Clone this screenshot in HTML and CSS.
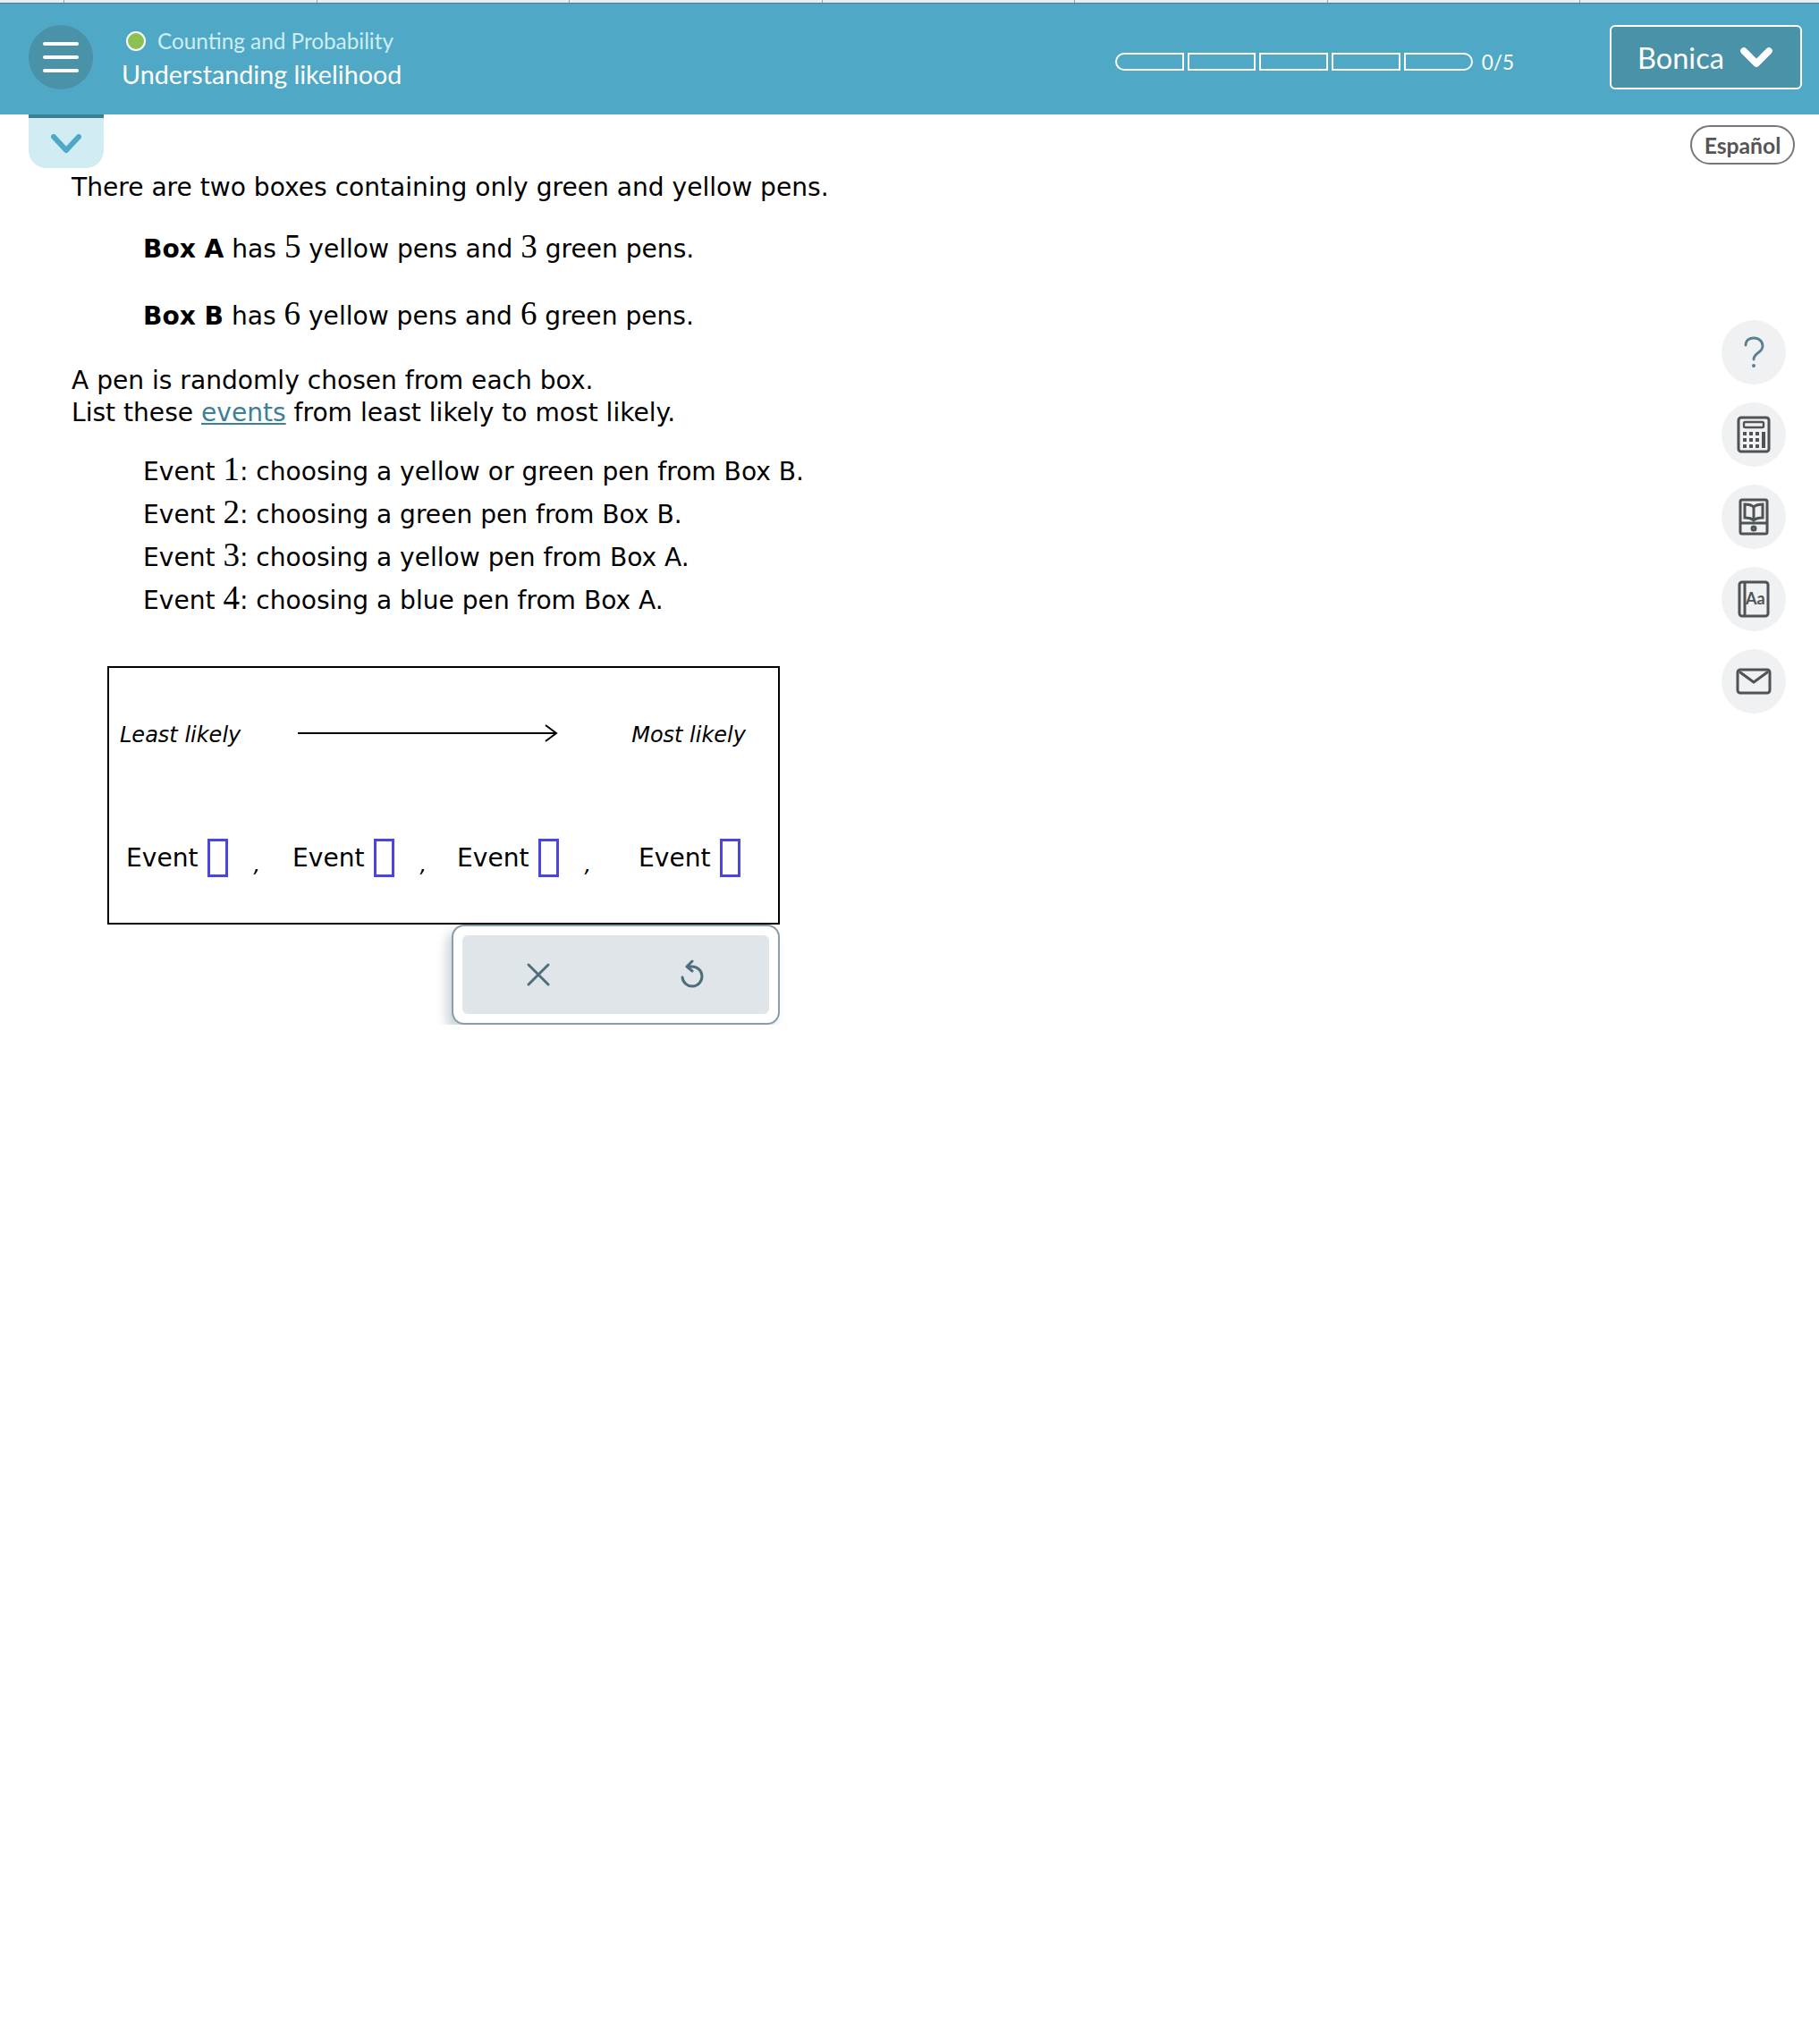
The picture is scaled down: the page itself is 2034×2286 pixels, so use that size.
FILE: index.html
```html
<!DOCTYPE html>
<html lang="en">
<head>
    <meta charset="UTF-8">
    <title>Understanding likelihood</title>
    <link rel="stylesheet" href="styles.css">
</head>
<body>
    <div class="tabstrip">
        <div class="tabcell first"></div>
        <div class="tabcell"></div>
        <div class="tabcell"></div>
        <div class="tabcell"></div>
        <div class="tabcell"></div>
        <div class="tabcell"></div>
        <div class="tabcell"></div>
    </div>

    <header class="topbar">
        <button class="menu-btn">
            <span></span><span></span><span></span>
        </button>
        <div class="titles">
            <div class="topic"><i class="dot"></i>Counting and Probability</div>
            <div class="lesson">Understanding likelihood</div>
        </div>
        <div class="progress">
            <div class="segments">
                <i></i><i></i><i></i><i></i><i></i>
            </div>
            <span class="score">0/5</span>
        </div>
        <button class="user-btn">
            Bonica
            <svg width="36" height="24" viewBox="0 0 36 24"><path d="M4 5 L18 19 L32 5" fill="none" stroke="#fff" stroke-width="7.5" stroke-linejoin="round" stroke-linecap="round"/></svg>
        </button>
    </header>

    <div class="page">
        <main class="content">
            <div class="drawer-tab">
                <svg width="34" height="22" viewBox="0 0 34 22"><path d="M3 3 L17 18 L31 3" fill="none" stroke="#4fa8c5" stroke-width="6" stroke-linejoin="round" stroke-linecap="round"/></svg>
            </div>

            <p class="lead">There are two boxes containing only green and yellow pens.</p>
            <p class="indent box-a"><b>Box A</b> has <span class="num">5</span> yellow pens and <span class="num">3</span> green pens.</p>
            <p class="indent box-b"><b>Box B</b> has <span class="num">6</span> yellow pens and <span class="num">6</span> green pens.</p>
            <p class="task">A pen is randomly chosen from each box.<br>List these <a href="#">events</a> from least likely to most likely.</p>

            <ul class="events">
                <li>Event <span class="num">1</span>: choosing a yellow or green pen from Box B.</li>
                <li>Event <span class="num">2</span>: choosing a green pen from Box B.</li>
                <li>Event <span class="num">3</span>: choosing a yellow pen from Box A.</li>
                <li>Event <span class="num">4</span>: choosing a blue pen from Box A.</li>
            </ul>

            <div class="answer">
                <div class="scale">
                    <em>Least likely</em>
                    <svg class="arrow" width="292" height="24" viewBox="0 0 292 24"><path d="M0 12 H289 M277 3 L289 12 L277 21" fill="none" stroke="#000" stroke-width="2"/></svg>
                    <em>Most likely</em>
                </div>
                <div class="slots">
                    <div class="slot">Event <i class="blank"></i><em class="comma">,</em></div>
                    <div class="slot">Event <i class="blank"></i><em class="comma">,</em></div>
                    <div class="slot">Event <i class="blank"></i><em class="comma">,</em></div>
                    <div class="slot">Event <i class="blank"></i></div>
                </div>
            </div>

            <div class="keypad">
                <div class="keypad-inner">
                    <svg width="28" height="28" viewBox="0 0 28 28"><path d="M3 3 L25 25 M25 3 L3 25" fill="none" stroke="#4d6f7c" stroke-width="3" stroke-linecap="round"/></svg>
                    <svg width="30" height="34" viewBox="0 0 30 34"><path d="M15 2 L9 8 L15 13 M10 8 H15 A11 11 0 1 1 4 20" fill="none" stroke="#4d6f7c" stroke-width="3" stroke-linecap="round" stroke-linejoin="round"/></svg>
                </div>
            </div>
        </main>

        <aside class="rail">
            <button class="lang">Español</button>
            <div class="tools">
                <button class="tool">
                    <svg width="40" height="40" viewBox="0 0 40 40"><path d="M11 12 C11 6 16 4 20 4 C26 4 30 8 30 13 C30 21 20 20 20 28" fill="none" stroke="#5a7f8e" stroke-width="2.8" stroke-linecap="round"/><circle cx="20" cy="35" r="2" fill="#5a7f8e"/></svg>
                </button>
                <button class="tool">
                    <svg width="40" height="42" viewBox="0 0 40 42">
                        <rect x="3" y="2" width="34" height="38" rx="3" fill="none" stroke="#4d5356" stroke-width="3"/>
                        <rect x="9" y="7" width="22" height="6" rx="1.5" fill="none" stroke="#4d5356" stroke-width="2.4"/>
                        <g fill="#4d5356">
                            <rect x="8" y="18" width="4" height="4"/><rect x="15" y="18" width="4" height="4"/><rect x="22" y="18" width="4" height="4"/><rect x="29" y="18" width="4" height="18"/>
                            <rect x="8" y="25" width="4" height="4"/><rect x="15" y="25" width="4" height="4"/><rect x="22" y="25" width="4" height="4"/>
                            <rect x="8" y="32" width="4" height="4"/><rect x="15" y="32" width="4" height="4"/><rect x="22" y="32" width="4" height="4"/>
                        </g>
                    </svg>
                </button>
                <button class="tool">
                    <svg width="34" height="42" viewBox="0 0 34 42" fill="none" stroke="#4d5356" stroke-width="3">
                        <rect x="2" y="2" width="30" height="38" rx="2"/>
                        <path d="M2 28 H32"/>
                        <path d="M17 10 C14 7 10 7 7 7 V22 C10 22 14 22 17 25 C20 22 24 22 27 22 V7 C24 7 20 7 17 10 V25"/>
                        <circle cx="17" cy="34" r="2"/>
                    </svg>
                </button>
                <button class="tool">
                    <svg class="dict" width="36" height="42" viewBox="0 0 36 42" fill="none" stroke="#4d5356" stroke-width="3">
                        <rect x="2" y="2" width="32" height="38" rx="3"/>
                        <path d="M8 2 V40"/>
                    </svg>
                    <span class="dict-label">Aa</span>
                </button>
                <button class="tool">
                    <svg width="40" height="30" viewBox="0 0 40 30" fill="none" stroke="#4d5356" stroke-width="3" stroke-linecap="round" stroke-linejoin="round">
                        <rect x="2" y="2" width="36" height="26" rx="3"/>
                        <path d="M5 5 L20 16 L35 5"/>
                    </svg>
                </button>
            </div>
        </aside>
    </div>
</body>
</html>
```

FILE: styles.css
```css
* {
    box-sizing: border-box;
}

body {
    margin: 0;
    background: #fff;
    color: #000;
    font-family: "DejaVu Sans", sans-serif;
    font-size: 28.1px;
}

button {
    font-family: inherit;
    padding: 0;
    cursor: pointer;
}

p {
    margin: 0;
}

/* strip of the tabs behind the header */
.tabstrip {
    display: flex;
    height: 4px;
    background: #e8eff2;
    border-bottom: 1px solid #4b7f92;
}

.tabcell {
    width: 282.5px;
    border-right: 1px solid #9aa5aa;
}

.tabcell.first {
    width: 72px;
}

/* header */
.topbar {
    display: flex;
    align-items: center;
    height: 124px;
    padding: 0 19px 4px 32px;
    background: #4fa8c5;
    color: #fff;
    font-family: Lato, sans-serif;
}

.menu-btn {
    display: flex;
    flex-direction: column;
    align-items: center;
    justify-content: center;
    gap: 11px;
    width: 72px;
    height: 72px;
    border: 0;
    border-radius: 50%;
    background: #4a92a8;
}

.menu-btn span {
    width: 40px;
    height: 4px;
    border-radius: 2px;
    background: #fff;
}

.titles {
    flex: 1;
    margin: 2px 0 0 32px;
}

.topic {
    display: flex;
    align-items: center;
    margin-left: 5px;
    font-size: 24.3px;
    line-height: 36px;
    color: #cdeef5;
}

.dot {
    width: 22px;
    height: 22px;
    margin-right: 13px;
    border: 2px solid #fff;
    border-radius: 50%;
    background: #8cc152;
}

.lesson {
    font-size: 28.7px;
    line-height: 38px;
}

.progress {
    display: flex;
    align-items: center;
    margin: 10px 107px 0 0;
}

.segments {
    display: flex;
    gap: 4px;
}

.segments i {
    width: 76.8px;
    height: 20px;
    border: 2px solid #fff;
}

.segments i:first-child {
    border-radius: 10px 0 0 10px;
}

.segments i:last-child {
    border-radius: 0 10px 10px 0;
}

.score {
    margin-left: 10px;
    font-size: 22.5px;
}

.user-btn {
    display: flex;
    align-items: center;
    gap: 18px;
    width: 215px;
    height: 72px;
    padding-left: 29px;
    border: 2px solid #fff;
    border-radius: 6px;
    background: #4a92a8;
    color: #fff;
    font-family: Lato, sans-serif;
    font-size: 32.5px;
}

/* page body */
.page {
    display: flex;
    justify-content: space-between;
}

.content {
    width: 1000px;
    padding-left: 32px;
}

.drawer-tab {
    display: flex;
    justify-content: center;
    align-items: center;
    width: 84px;
    height: 60px;
    padding-top: 2px;
    border-top: 4px solid #3b7f95;
    border-radius: 0 0 20px 20px;
    background: #d1edf3;
}

.lead {
    margin: 2px 0 0 48px;
    line-height: 40px;
}

.indent {
    margin-left: 128px;
    line-height: 40px;
}

.box-a {
    margin-top: 27px;
}

.box-b {
    margin-top: 33px;
}

.task {
    margin: 34px 0 0 48px;
    line-height: 36px;
}

.task a {
    color: #3b8098;
}

.num {
    font-family: "Liberation Serif", serif;
    font-size: 37px;
    line-height: 1;
}

.events {
    list-style: none;
    margin: 24px 0 0 128px;
    padding: 0;
}

.events li {
    height: 48px;
    line-height: 48px;
}

/* answer box */
.answer {
    width: 752px;
    height: 289px;
    margin: 49px 0 0 88px;
    border: 2px solid #000;
}

.scale {
    display: flex;
    align-items: center;
    justify-content: space-between;
    height: 148px;
    padding: 0 36px 0 12px;
    font-size: 24px;
}

.scale em {
    margin-top: 2px;
}

.arrow {
    margin: -2px 18px 0 0;
}

.slots {
    display: grid;
    grid-template-columns: 186px 184px 203px 1fr;
    margin-top: 22px;
    padding-left: 19px;
}

.slot {
    display: flex;
    align-items: center;
    height: 84px;
}

.blank {
    width: 23px;
    height: 43px;
    margin-left: 11px;
    border: 3px solid #4a46d8;
}

.comma {
    margin: 16px 0 0 28px;
    font-size: 24px;
}

/* keypad under the answer box */
.keypad {
    width: 367px;
    height: 112px;
    margin-left: 473px;
    padding: 10px;
    border: 2px solid #8a9ea8;
    border-radius: 14px;
    background: #fff;
    box-shadow: -6px 8px 12px rgba(90, 120, 135, .3);
}

.keypad-inner {
    display: flex;
    align-items: center;
    justify-content: space-around;
    height: 88px;
    border-radius: 6px;
    background: #dfe5e8;
}

/* right side */
.rail {
    display: flex;
    flex-direction: column;
    align-items: flex-end;
    padding: 12px 27px 0 0;
}

.lang {
    width: 117px;
    height: 44px;
    border: 2px solid #777;
    border-radius: 22px;
    background: #fff;
    color: #555;
    font-family: Lato, sans-serif;
    font-size: 24.7px;
    font-weight: 700;
}

.tools {
    display: flex;
    flex-direction: column;
    gap: 20px;
    margin: 174px 10px 0 0;
}

.tool {
    position: relative;
    display: flex;
    align-items: center;
    justify-content: center;
    width: 72px;
    height: 72px;
    border: 0;
    border-radius: 50%;
    background: #f0f1f2;
}

.dict-label {
    position: absolute;
    left: 27px;
    top: 24px;
    font-family: Lato, sans-serif;
    font-size: 18px;
    font-weight: 700;
    color: #4d5356;
}
```
